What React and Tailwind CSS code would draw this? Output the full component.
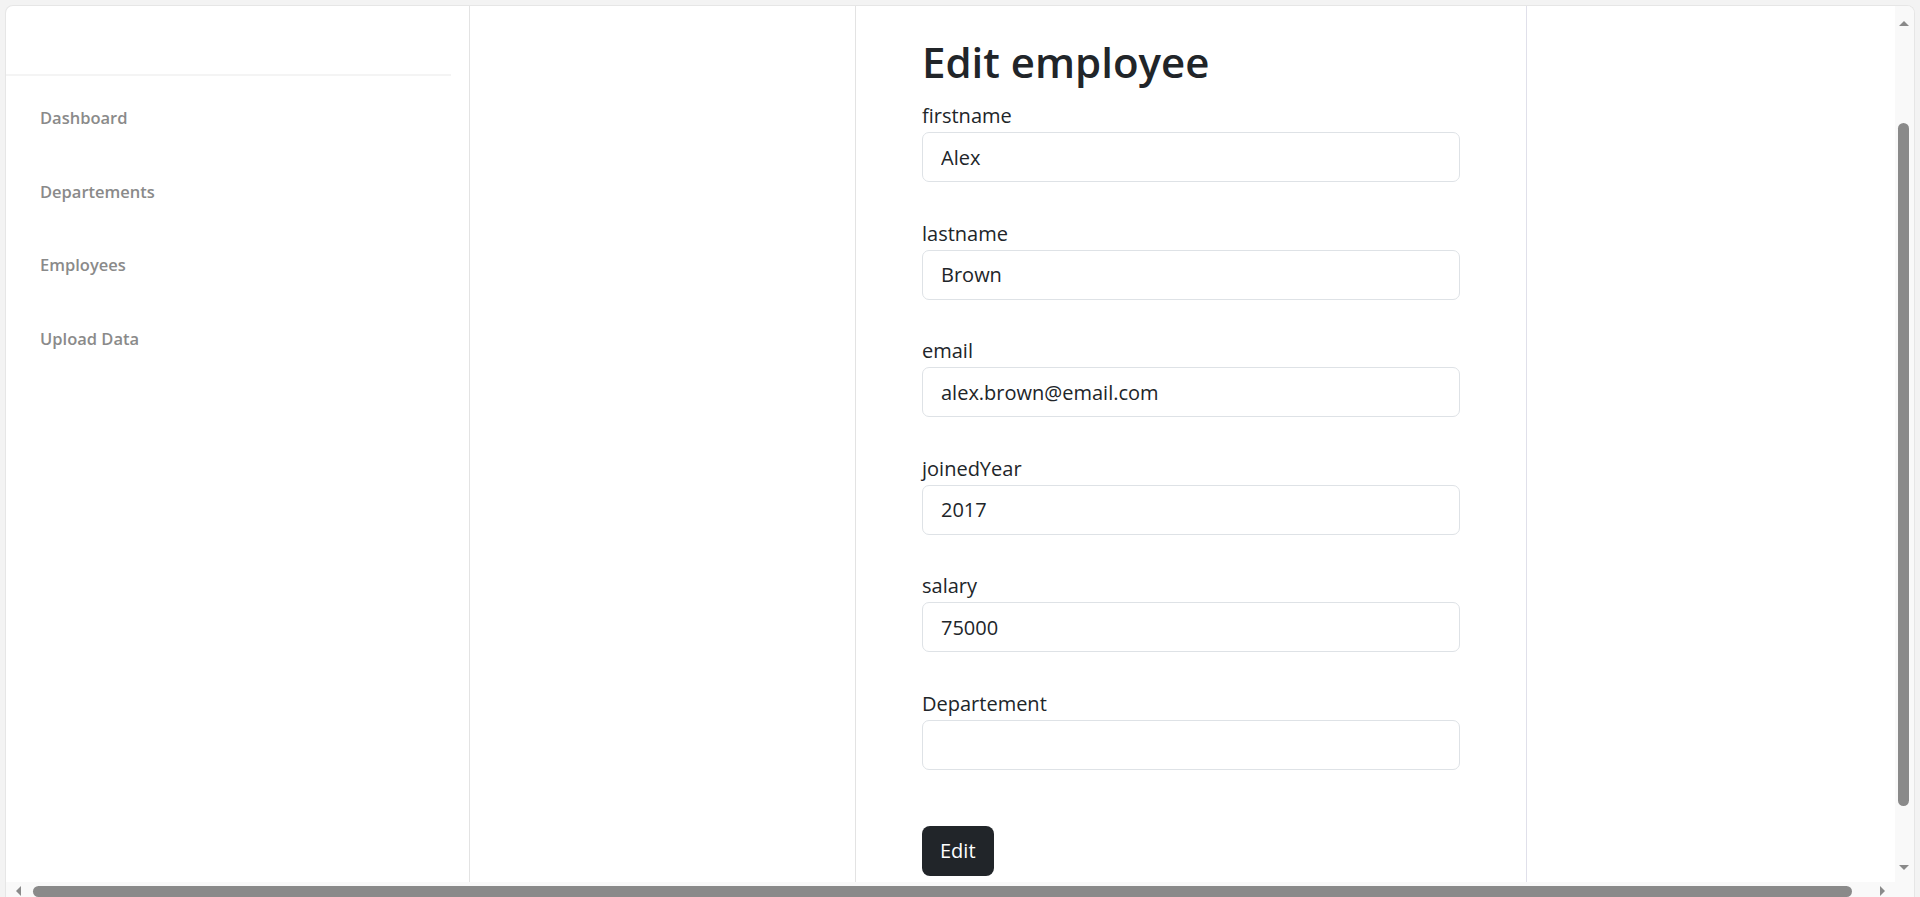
import { useState } from "react";

const font = { fontFamily: '"Segoe UI", "Open Sans", "Noto Sans", sans-serif' };

const fields = [
  { name: "firstname", value: "Alex" },
  { name: "lastname", value: "Brown" },
  { name: "email", value: "alex.brown@email.com" },
  { name: "joinedYear", value: "2017" },
  { name: "salary", value: "75000" },
  { name: "Departement", value: "" },
];

const navLinks = ["Dashboard", "Departements", "Employees", "Upload Data"];

export default function App() {
  const [form, setForm] = useState(
    Object.fromEntries(fields.map((f) => [f.name, f.value]))
  );

  return (
    <div
      className="h-[897px] w-[1920px] bg-[#f3f3f3] pt-[5px] px-[5px] overflow-hidden"
      style={font}
    >
      <div className="h-full flex flex-col bg-white border-t border-l border-r border-[#e6e6e6] rounded-t-[8px] overflow-hidden">
        <div className="flex flex-1 min-h-0">
          {/* Sidebar */}
          <aside className="w-[464px] shrink-0 border-r border-[#e3e3e3]">
            <div className="h-[70px] mr-[18px] border-b-2 border-[#f4f4f4]"></div>
            <nav className="pt-[6px] pl-[34px]">
              {navLinks.map((link) => (
                <a
                  key={link}
                  className="h-[73.5px] flex items-center text-[16.5px] font-semibold text-[#8a8a8a]"
                >
                  {link}
                </a>
              ))}
            </nav>
          </aside>

          {/* empty column */}
          <div className="w-[386px] shrink-0 border-r border-[#e3e3e3]"></div>

          {/* Form column */}
          <div className="w-[671px] shrink-0 border-r border-[#e0e0ea] pl-[66px] text-[#212529]">
            <h1 className="pt-[31px] text-[42px] leading-[50px] font-semibold">
              Edit employee
            </h1>
            <form className="mt-[13px] w-[538px]" onSubmit={(e) => e.preventDefault()}>
              <div className="flex flex-col gap-[35.5px]">
                {fields.map((f) => (
                  <div key={f.name}>
                    <label className="block h-[32px] leading-[32px] text-[20px]">
                      {f.name}
                    </label>
                    <input
                      value={form[f.name]}
                      onChange={(e) => setForm({ ...form, [f.name]: e.target.value })}
                      className="w-full h-[50px] px-[18px] text-[20px] border border-[#dee2e6] rounded-[7px] outline-none"
                    />
                  </div>
                ))}
              </div>
              <button className="mt-[56px] h-[50px] px-[18px] rounded-[8px] bg-[#212529] text-white text-[20px]">
                Edit
              </button>
            </form>
          </div>

          <div className="flex-1"></div>

          {/* vertical scrollbar */}
          <div className="w-[19px] shrink-0 bg-[#f9f9f9] flex flex-col items-center pr-[2px]">
            <div className="mt-[15px] w-0 h-0 border-l-[5px] border-r-[5px] border-b-[5px] border-l-transparent border-r-transparent border-b-[#8a8a8a]"></div>
            <div className="mt-[97px] w-[11px] h-[683px] rounded-full bg-[#8a8a8a]"></div>
            <div className="mt-auto mb-[12px] w-0 h-0 border-l-[5px] border-r-[5px] border-t-[5px] border-l-transparent border-r-transparent border-t-[#8a8a8a]"></div>
          </div>
        </div>

        {/* horizontal scrollbar */}
        <div className="h-[15px] shrink-0 bg-[#f9f9f9] flex items-end">
          <div className="ml-[10px] mb-[1px] w-0 h-0 border-t-[5px] border-b-[5px] border-r-[5px] border-t-transparent border-b-transparent border-r-[#8a8a8a]"></div>
          <div className="ml-[12px] w-[1819px] h-[11px] rounded-l-full rounded-r-full bg-[#8a8a8a]"></div>
          <div className="ml-[28px] mb-[1px] w-0 h-0 border-t-[5px] border-b-[5px] border-l-[5px] border-t-transparent border-b-transparent border-l-[#8a8a8a]"></div>
        </div>
      </div>
    </div>
  );
}
